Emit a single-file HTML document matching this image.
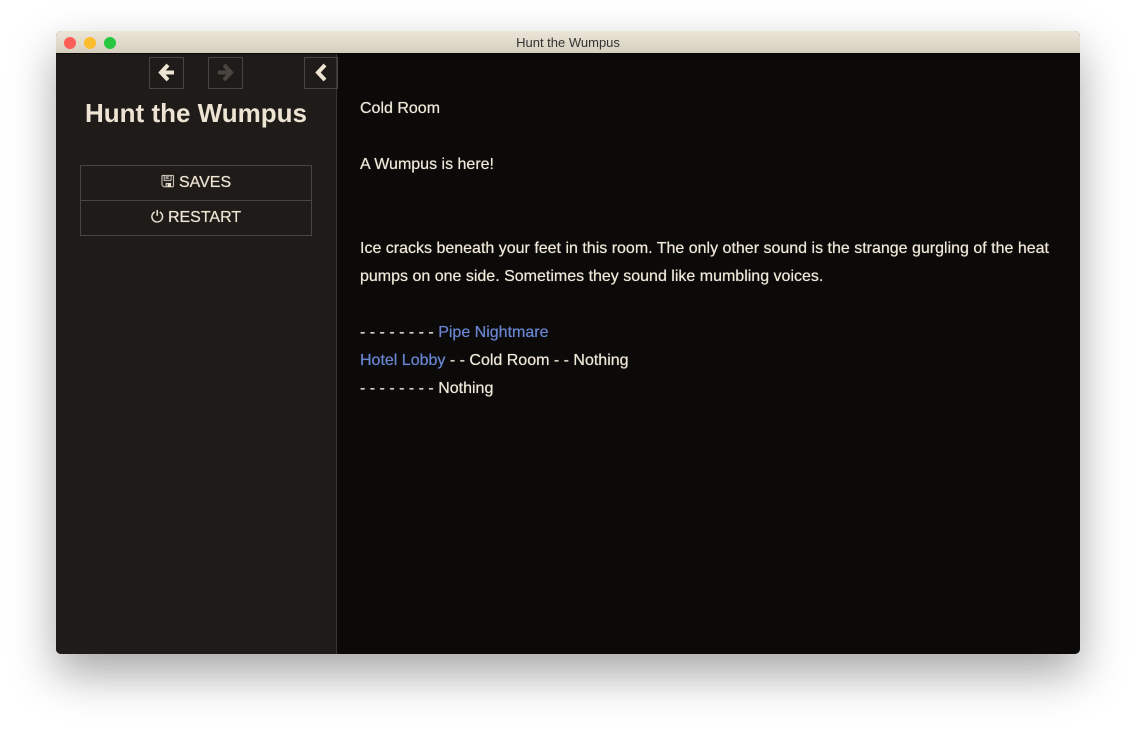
<!DOCTYPE html>
<html><head><style>
body{margin:0;width:1136px;height:734px;background:#fff;position:relative;overflow:hidden;font-family:"Liberation Sans",sans-serif}
.win{position:absolute;left:56px;top:31px;width:1024px;height:623px;box-shadow:0 20px 45px rgba(0,0,0,.35);border-radius:5px;overflow:hidden;background:#0b0a09}
.title{height:22px;background:linear-gradient(#ece6d8,#d6cfbf);text-align:center;font-size:13px;line-height:23px;color:#333;position:relative}
.dot{position:absolute;top:6px;width:12px;height:12px;border-radius:50%}
.side{position:absolute;left:0;top:23px;width:280px;height:600px;background:#1f1b18;border-right:1px solid #3a3632}
.nb{position:absolute;top:3px;width:35px;height:32px;border:1px solid #4a4540;box-sizing:border-box}
.h{position:absolute;left:0;width:280px;top:44px;text-align:center;color:#ede4d3;font-weight:bold;font-size:26px}
.btn{position:absolute;left:24px;width:232px;height:36px;border:1px solid #4a4540;box-sizing:border-box;color:#ede4d3;font-size:16px;text-align:center;line-height:34px;text-shadow:0 0 .6px #ede4d3}
.main{position:absolute;left:304px;top:25px;color:#f0e8d8;font-size:16px;line-height:28px;text-shadow:0 0 .6px #f0e8d8}
a{color:#6a85d0;text-decoration:none;text-shadow:0 0 .6px #6a85d0}
</style></head><body>
<div class="win">
<div class="title"><div class="dot" style="left:8px;background:#fc5f57"></div><div class="dot" style="left:28px;background:#fdbc2e"></div><div class="dot" style="left:48px;background:#27c840"></div>Hunt the Wumpus</div>
<div class="side">
<div class="nb" style="left:93px"><svg width="33" height="30" viewBox="0 0 33 30"><path d="M18 7 L11 14.5 L18 22 M11 14.5 H24" stroke="#ede4d3" stroke-width="4" fill="none"/></svg></div>
<div class="nb" style="left:152px"><svg width="33" height="30" viewBox="0 0 33 30"><path d="M15 7 L22 14.5 L15 22 M22 14.5 H9" stroke="#4a4540" stroke-width="4" fill="none"/></svg></div>
<div class="nb" style="left:248px;width:34px"><svg width="33" height="30" viewBox="0 0 33 30"><path d="M20 7 L13 14.5 L20 22" stroke="#ede4d3" stroke-width="4" fill="none"/></svg></div>
<div class="h">Hunt the Wumpus</div>
<div class="btn" style="top:111px">🖫 SAVES</div>
<div class="btn" style="top:146px">⏻ RESTART</div>
</div>
<div class="main">
<div style="position:absolute;top:39px;white-space:nowrap">Cold Room</div>
<div style="position:absolute;top:95px;white-space:nowrap">A Wumpus is here!</div>
<div style="position:absolute;top:179px;width:700px">Ice cracks beneath your feet in this room. The only other sound is the strange gurgling of the heat pumps on one side. Sometimes they sound like mumbling voices.</div>
<div style="position:absolute;top:263px;white-space:nowrap">- - - - - - - - <a>Pipe Nightmare</a><br><a>Hotel Lobby</a> - - Cold Room - - Nothing<br>- - - - - - - - Nothing</div>
</div>
</div>
</body></html>
